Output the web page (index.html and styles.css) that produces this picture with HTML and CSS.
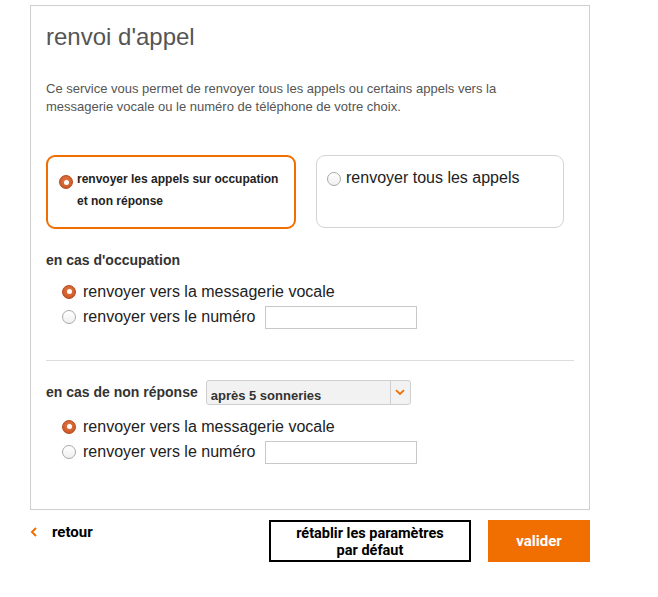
FILE: index.html
```html
<!DOCTYPE html>
<html lang="fr">
<head>
<meta charset="utf-8">
<link rel="stylesheet" href="styles.css">
</head>
<body>
<div class="panel">
  <h1 class="title">renvoi d'appel</h1>
  <p class="intro">Ce service vous permet de renvoyer tous les appels ou certains appels vers la messagerie vocale ou le numéro de téléphone de votre choix.</p>

  <div class="cards">
    <div class="card card-active">
      <span class="radio radio-on"></span>
      <span class="card-bold">renvoyer les appels sur occupation et non réponse</span>
    </div>
    <div class="card card-idle">
      <span class="radio radio-off"></span>
      <span class="card-text">renvoyer tous les appels</span>
    </div>
  </div>

  <div class="section">
    <div class="section-head">en cas d'occupation</div>
    <div class="opts">
      <div class="opt"><span class="radio radio-on"></span><span class="opt-label">renvoyer vers la messagerie vocale</span></div>
      <div class="opt"><span class="radio radio-off"></span><span class="opt-label">renvoyer vers le numéro</span><span class="field"></span></div>
    </div>
  </div>

  <div class="sep"></div>

  <div class="section section-2">
    <div class="section-head row-head">en cas de non réponse
      <div class="select"><span class="select-val">après 5 sonneries</span><span class="select-btn"><svg width="10" height="7" viewBox="0 0 10 7"><path d="M1 1.2 L5 5 L9 1.2" fill="none" stroke="#f16e00" stroke-width="1.8"/></svg></span></div>
    </div>
    <div class="opts opts-2">
      <div class="opt"><span class="radio radio-on"></span><span class="opt-label">renvoyer vers la messagerie vocale</span></div>
      <div class="opt"><span class="radio radio-off"></span><span class="opt-label">renvoyer vers le numéro</span><span class="field"></span></div>
    </div>
  </div>
</div>

<div class="actions">
  <div class="back"><svg class="chev" width="8" height="10" viewBox="0 0 8 10"><path d="M6 1 L2 5 L6 9" fill="none" stroke="#f16e00" stroke-width="2"/></svg><span>retour</span></div>
  <div class="btn btn-outline">rétablir les paramètres<br>par défaut</div>
  <div class="btn btn-primary">valider</div>
</div>
</body>
</html>
```

FILE: styles.css
```css
* { box-sizing: border-box; }
body {
  margin: 0;
  background: #fff;
  font-family: "Liberation Sans", Arial, sans-serif;
  color: #333;
}
.panel {
  margin: 5px 0 0 30px;
  width: 560px;
  height: 505px;
  border: 1px solid #cfcfcf;
  padding: 0 15px;
}
.title {
  margin: 16px 0 0;
  font-size: 24px;
  font-weight: normal;
  line-height: 30px;
  color: #555;
}
.intro {
  margin: 28px 0 0;
  width: 490px;
  font-size: 13px;
  line-height: 18px;
  color: #555;
}
.cards {
  display: flex;
  gap: 20px;
  margin-top: 39px;
}
.card {
  border-radius: 9px;
  display: flex;
  align-items: flex-start;
}
.card-active {
  width: 250px;
  height: 74px;
  border: 2px solid #f16e00;
  padding: 15px 12px 0 11px;
}
.card-active .radio { margin-right: 4px; }
.card-idle {
  width: 248px;
  height: 73px;
  border: 1px solid #d4d4d4;
  padding: 13px 10px 0 10px;
}
.card-idle .radio { margin-right: 5px; }
.card-bold {
  font-size: 12px;
  font-weight: bold;
  line-height: 22px;
  margin-top: -4px;
  color: #222;
}
.card-text {
  font-size: 16px;
  line-height: 18px;
  color: #222;
}
.card .radio { margin-top: 3px; }
.radio {
  display: inline-block;
  flex: none;
  width: 14px;
  height: 14px;
  border-radius: 50%;
  position: relative;
}
.radio-on {
  background: radial-gradient(circle at 50% 40%, #e47744 0%, #d2602f 60%, #b44a1f 100%);
  border: 1px solid #b5491d;
}
.radio-on::after {
  content: "";
  position: absolute;
  left: 3.5px;
  top: 3.5px;
  width: 5px;
  height: 5px;
  border-radius: 50%;
  background: #fff;
}
.radio-off {
  background: linear-gradient(#ffffff, #f0f0f0);
  border: 1px solid #a9a9a9;
}
.section-head {
  font-size: 14px;
  font-weight: bold;
  color: #333;
}
.section { margin-top: 23px; }
.opts {
  margin: 11px 0 0 16px;
}
.opt {
  display: flex;
  align-items: center;
  height: 25px;
}
.opt .radio { margin-right: 7px; }
.opt-label {
  font-size: 16px;
  color: #222;
}
.field {
  display: inline-block;
  width: 152px;
  height: 23px;
  border: 1px solid #c8c8c8;
  margin-left: 9px;
  margin-top: 2px;
  background: #fff;
}
.sep {
  height: 1px;
  background: #ddd;
  margin-top: 31px;
}
.section-2 { margin-top: 17px; }
.row-head {
  display: flex;
  align-items: center;
  gap: 8px;
}
.select {
  display: flex;
  width: 205px;
  height: 25px;
  border: 1px solid #cfcfcf;
  border-radius: 3px;
  background: #f3f2f2;
  margin-top: 2px;
}
.select-val {
  flex: 1;
  font-size: 13px;
  font-weight: bold;
  padding: 7px 0 0 4px;
  color: #333;
}
.select-btn {
  width: 20px;
  border-left: 1px solid #cfcfcf;
  display: flex;
  align-items: center;
  justify-content: center;
}
.opts-2 { margin-top: 9px; }
.actions {
  display: flex;
  align-items: flex-start;
  gap: 17px;
  margin: 10px 0 0 30px;
  width: 560px;
  font-family: Roboto, "Liberation Sans", sans-serif;
  font-weight: bold;
  font-size: 15px;
  color: #000;
}
.back {
  flex: 1;
  display: flex;
  align-items: center;
  padding-top: 3px;
}
.back .chev { margin: 0 14px 0 0; }
.btn {
  height: 42px;
  text-align: center;
}
.btn-outline {
  width: 202px;
  border: 2px solid #000;
  padding-top: 3px;
  font-size: 14.5px;
  line-height: 17px;
}
.btn-primary {
  width: 102px;
  background: #f16e00;
  color: #fff;
  line-height: 42px;
}
```
